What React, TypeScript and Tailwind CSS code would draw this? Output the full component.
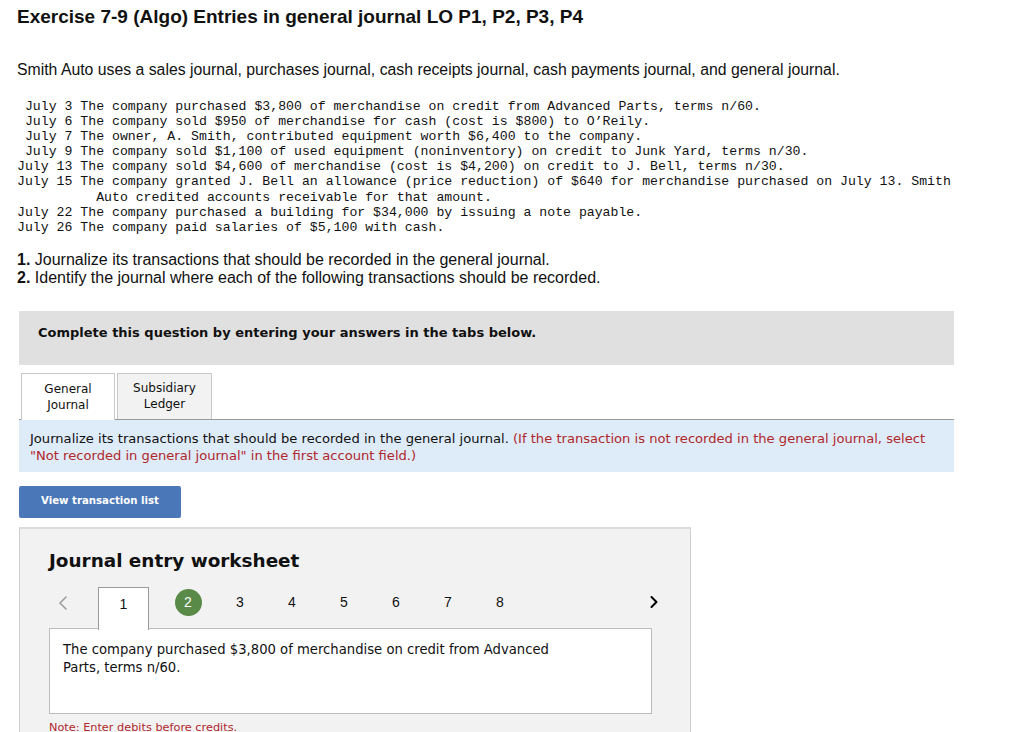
import React from "react";
import { ChevronLeft, ChevronRight } from "lucide-react";

const transactions = ` July 3 The company purchased $3,800 of merchandise on credit from Advanced Parts, terms n/60.
 July 6 The company sold $950 of merchandise for cash (cost is $800) to O\u2019Reily.
 July 7 The owner, A. Smith, contributed equipment worth $6,400 to the company.
 July 9 The company sold $1,100 of used equipment (noninventory) on credit to Junk Yard, terms n/30.
July 13 The company sold $4,600 of merchandise (cost is $4,200) on credit to J. Bell, terms n/30.
July 15 The company granted J. Bell an allowance (price reduction) of $640 for merchandise purchased on July 13. Smith
          Auto credited accounts receivable for that amount.
July 22 The company purchased a building for $34,000 by issuing a note payable.
July 26 The company paid salaries of $5,100 with cash.`;

const sans = "font-['Liberation_Sans',Arial,sans-serif]";
const verdana = "font-['DejaVu_Sans',Verdana,sans-serif]";
const narrow = "font-['DejaVu_Sans_Condensed','DejaVu_Sans',Verdana,sans-serif]";

const App = () => {
  return (
    <div className="w-[1024px] h-[732px] overflow-hidden bg-white text-[#111]">
      <div className="pl-[17px] pt-[5px]">
        {/* Heading */}
        <h1 className={`${sans} text-[19px] leading-[24px] font-bold`}>
          Exercise 7-9 (Algo) Entries in general journal LO P1, P2, P3, P4
        </h1>

        <p className={`${sans} mt-[31px] text-[15.8px] leading-[20px]`}>
          Smith Auto uses a sales journal, purchases journal, cash receipts journal, cash payments journal, and general
          journal.
        </p>

        <pre className="mt-[19px] font-['Liberation_Mono','Courier_New',monospace] text-[13.2px] leading-[15.1px]">
          {transactions}
        </pre>

        <div className={`${sans} mt-[16px] text-[16px] leading-[18px]`}>
          <p>
            <span className="font-bold">1.</span> Journalize its transactions that should be recorded in the general
            journal.
          </p>
          <p>
            <span className="font-bold">2.</span> Identify the journal where each of the following transactions should
            be recorded.
          </p>
        </div>

        {/* Instructions box */}
        <div className="ml-[2px] mt-[24px] w-[935px] h-[54px] bg-[#e0e0e0] pl-[19px] pt-[14px]">
          <p className={`${verdana} font-bold text-[13px] leading-[16px]`}>
            Complete this question by entering your answers in the tabs below.
          </p>
        </div>

        {/* Tabs */}
        <div className="ml-[2px] mt-[8px] w-[935px] flex gap-[2px] pl-[2px] border-b border-[#9a9a9a]">
          <div
            className={`${verdana} w-[94px] h-[47px] -mb-px bg-white border border-b-0 border-[#c8c8c8] flex items-center justify-center text-center text-[12px] leading-[16px]`}
          >
            General
            <br />
            Journal
          </div>
          <div
            className={`${verdana} w-[95px] h-[46px] bg-[#f2f2f2] border border-b-0 border-[#c8c8c8] flex items-center justify-center text-center text-[12px] leading-[16px]`}
          >
            Subsidiary
            <br />
            Ledger
          </div>
        </div>

        <div
          className={`${verdana} ml-[2px] w-[935px] h-[52px] bg-[#deebf8] pl-[11px] pr-[8px] pt-[10px] text-[13.1px] leading-[17px]`}
        >
          Journalize its transactions that should be recorded in the general journal.{" "}
          <span className="text-[#b0272c]">
            (If the transaction is not recorded in the general journal, select "Not recorded in general journal" in the
            first account field.)
          </span>
        </div>

        <button
          className={`${narrow} ml-[2px] mt-[14px] w-[162px] h-[32px] rounded-[2px] bg-[#4a77b7] text-white font-bold text-[11.3px]`}
        >
          View transaction list
        </button>

        {/* Worksheet */}
        <div className="ml-[2px] mt-[9px] w-[672px] h-[220px] bg-[#f2f2f2] border border-[#cfcfcf] border-t-2 border-t-[#dcdcdc] px-[29px] pt-[19px]">
          <h2 className={`${verdana} font-bold text-[18.4px] leading-[26px]`}>Journal entry worksheet</h2>

          <div className="mt-[13px] flex items-start h-[42px]">
            <div className="w-[49px] h-[32px] flex items-center pl-[2px] text-[#9a9a9a]">
              <ChevronLeft size={24} strokeWidth={1.5} />
            </div>
            <div
              className={`${sans} w-[51px] h-[43px] relative z-10 bg-white border border-b-0 border-[#9a9a9a] flex justify-center pt-[7px] leading-[18px] text-[14px]`}
            >
              1
            </div>
            <div className="ml-[13px] flex h-[32px] items-center">
              {[2, 3, 4, 5, 6, 7, 8].map((n) => (
                <div key={n} className={`${sans} w-[52px] flex items-center justify-center text-[14px]`}>
                  {n === 2 ? (
                    <span className="w-[27px] h-[27px] rounded-full bg-[#5a8a47] text-white flex items-center justify-center">
                      2
                    </span>
                  ) : (
                    n
                  )}
                </div>
              ))}
            </div>
            <div className="flex-1 h-[31px] flex items-center justify-end -mr-[3px] text-black">
              <ChevronRight size={20} strokeWidth={2.4} />
            </div>
          </div>

          <div className="-mt-px w-[603px] h-[86px] bg-white border border-[#bdbdbd] pl-[13px] pt-[12px]">
            <p className={`${verdana} w-[500px] text-[13.2px] leading-[18px]`}>
              The company purchased $3,800 of merchandise on credit from Advanced Parts, terms n/60.
            </p>
          </div>

          <p className={`${verdana} mt-[6px] text-[11.3px] leading-[16px] text-[#b0272c]`}>
            Note: Enter debits before credits.
          </p>
        </div>
      </div>
    </div>
  );
};

export default App;
